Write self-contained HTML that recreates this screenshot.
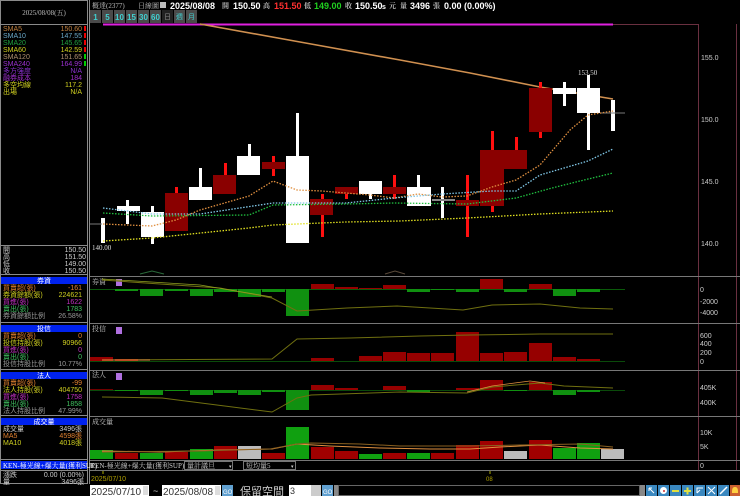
<!DOCTYPE html>
<html><head><meta charset="utf-8"><style>
html,body{margin:0;padding:0;background:#000;width:740px;height:496px;overflow:hidden}
svg{display:block}
text{font-family:"Liberation Sans","Noto Sans CJK TC",sans-serif}
.s{font-family:"Liberation Serif","Noto Serif CJK SC",serif;font-size:7px}
</style></head><body>
<svg width="740" height="496" viewBox="0 0 740 496" xmlns="http://www.w3.org/2000/svg">
<rect width="740" height="496" fill="#000"/>
<!-- left panel frame -->
<g stroke="#8a8a8a" stroke-width="1" fill="none">
<rect x="0.5" y="0.5" width="87" height="483"/>
<line x1="0" y1="24.5" x2="88" y2="24.5"/>
<line x1="0" y1="245.5" x2="88" y2="245.5"/>
<line x1="0" y1="274.5" x2="88" y2="274.5"/>
<line x1="0" y1="322.5" x2="88" y2="322.5"/>
<line x1="0" y1="369.5" x2="88" y2="369.5"/>
<line x1="0" y1="415.5" x2="88" y2="415.5"/>
<line x1="0" y1="459.5" x2="88" y2="459.5"/>
<line x1="0" y1="470.5" x2="88" y2="470.5"/>
<line x1="89.5" y1="0" x2="89.5" y2="484"/>
</g>
<text x="44" y="15" class="s" fill="#bbb" text-anchor="middle">2025/08/08(五)</text>
<g class="s">
<text x="3" y="31" fill="#c08040">SMA5</text><text x="82" y="31" fill="#c08040" text-anchor="end">150.60</text>
<text x="3" y="38" fill="#6aa8c8">SMA10</text><text x="82" y="38" fill="#6aa8c8" text-anchor="end">147.55</text>
<text x="3" y="45" fill="#20a040">SMA20</text><text x="82" y="45" fill="#20a040" text-anchor="end">145.65</text>
<text x="3" y="52" fill="#d0d020">SMA60</text><text x="82" y="52" fill="#d0d020" text-anchor="end">142.59</text>
<text x="3" y="59" fill="#b09070">SMA120</text><text x="82" y="59" fill="#b09070" text-anchor="end">151.65</text>
<text x="3" y="66" fill="#9a30d0">SMA240</text><text x="82" y="66" fill="#9a30d0" text-anchor="end">164.99</text>
<text x="3" y="73" fill="#8a30d0">多方強度</text><text x="82" y="73" fill="#8a30d0" text-anchor="end">N/A</text>
<text x="3" y="80" fill="#a030d0">融券成本</text><text x="82" y="80" fill="#a030d0" text-anchor="end">184</text>
<text x="3" y="87" fill="#d0d020">多空均線</text><text x="82" y="87" fill="#d0d020" text-anchor="end">117.2</text>
<text x="3" y="94" fill="#d0d020">出場</text><text x="82" y="94" fill="#d0d020" text-anchor="end">N/A</text>
</g>
<g fill="#e00"><rect x="84" y="26" width="2" height="5"/><rect x="84" y="33" width="2" height="5"/><rect x="84" y="40" width="2" height="5"/><rect x="84" y="47" width="2" height="5"/></g>
<g fill="#0c0"><rect x="84" y="54" width="2" height="5"/><rect x="84" y="61" width="2" height="5"/></g>
<g class="s" fill="#ccc">
<text x="3" y="252">開</text><text x="86" y="252" text-anchor="end">150.50</text>
<text x="3" y="259">高</text><text x="86" y="259" text-anchor="end">151.50</text>
<text x="3" y="266">低</text><text x="86" y="266" text-anchor="end">149.00</text>
<text x="3" y="273">收</text><text x="86" y="273" text-anchor="end">150.50</text>
</g>
<!-- blue headers -->
<g fill="#0022ee">
<rect x="1" y="277" width="86" height="7"/>
<rect x="1" y="325" width="86" height="7"/>
<rect x="1" y="372" width="86" height="7"/>
<rect x="1" y="418" width="86" height="7"/>
<rect x="1" y="461" width="86" height="8"/>
</g>
<g class="s" fill="#fff" text-anchor="middle">
<text x="44" y="283">券資</text><text x="44" y="331">投信</text><text x="44" y="378">法人</text><text x="44" y="424">成交量</text>
</g>
<text x="3" y="468" class="s" fill="#fff">KEN-極光線+爆大量(獲利SUP)</text>
<g class="s">
<text x="3" y="290" fill="#e08030">買賣超(張)</text><text x="82" y="290" fill="#e08030" text-anchor="end">-161</text>
<text x="3" y="297" fill="#d0d020">券資餘額(張)</text><text x="82" y="297" fill="#d0d020" text-anchor="end">224621</text>
<text x="3" y="304" fill="#c030c0">買進(張)</text><text x="82" y="304" fill="#c030c0" text-anchor="end">1622</text>
<text x="3" y="311" fill="#40c060">賣出(張)</text><text x="82" y="311" fill="#40c060" text-anchor="end">1783</text>
<text x="3" y="318" fill="#999">券資餘額比例</text><text x="82" y="318" fill="#999" text-anchor="end">26.58%</text>
<text x="3" y="338" fill="#e08030">買賣超(張)</text><text x="82" y="338" fill="#e08030" text-anchor="end">0</text>
<text x="3" y="345" fill="#d0d020">投信持股(張)</text><text x="82" y="345" fill="#d0d020" text-anchor="end">90966</text>
<text x="3" y="352" fill="#c030c0">買進(張)</text><text x="82" y="352" fill="#c030c0" text-anchor="end">0</text>
<text x="3" y="359" fill="#40c060">賣出(張)</text><text x="82" y="359" fill="#40c060" text-anchor="end">0</text>
<text x="3" y="366" fill="#999">投信持股比例</text><text x="82" y="366" fill="#999" text-anchor="end">10.77%</text>
<text x="3" y="385" fill="#e08030">買賣超(張)</text><text x="82" y="385" fill="#e08030" text-anchor="end">-99</text>
<text x="3" y="392" fill="#d0d020">法人持股(張)</text><text x="82" y="392" fill="#d0d020" text-anchor="end">404750</text>
<text x="3" y="399" fill="#c030c0">買進(張)</text><text x="82" y="399" fill="#c030c0" text-anchor="end">1758</text>
<text x="3" y="406" fill="#40c060">賣出(張)</text><text x="82" y="406" fill="#40c060" text-anchor="end">1858</text>
<text x="3" y="413" fill="#999">法人持股比例</text><text x="82" y="413" fill="#999" text-anchor="end">47.99%</text>
<text x="3" y="431" fill="#ccc">成交量</text><text x="82" y="431" fill="#ccc" text-anchor="end">3496張</text>
<text x="3" y="438" fill="#e08030">MA5</text><text x="82" y="438" fill="#e08030" text-anchor="end">4598張</text>
<text x="3" y="445" fill="#d0d020">MA10</text><text x="82" y="445" fill="#d0d020" text-anchor="end">4018張</text>
<text x="3" y="477" fill="#ccc">漲跌</text><text x="84" y="477" fill="#ccc" text-anchor="end">0.00 (0.00%)</text>
<text x="3" y="484" fill="#ccc">量</text><text x="84" y="484" fill="#ccc" text-anchor="end">3496張</text>
</g>

<!-- top info bar -->
<text x="92" y="8" class="s" fill="#bbb">概達(2377)</text>
<text x="138" y="8" class="s" fill="#bbb">日線圖</text>
<rect x="160" y="2" width="6" height="6" fill="#bbb"/>
<g font-weight="bold" font-size="9">
<text x="170" y="9" fill="#fff">2025/08/08</text>
<text x="222" y="8" class="s" fill="#bbb">開</text><text x="233" y="9" fill="#fff">150.50</text>
<text x="263" y="8" class="s" fill="#bbb">高</text><text x="274" y="9" fill="#ff3030">151.50</text>
<text x="304" y="8" class="s" fill="#bbb">低</text><text x="314" y="9" fill="#20d020">149.00</text>
<text x="345" y="8" class="s" fill="#bbb">收</text><text x="355" y="9" fill="#fff">150.50</text>
<text x="382" y="9" fill="#fff" font-size="7">s</text><text x="389" y="8" class="s" fill="#bbb">元</text>
<text x="400" y="8" class="s" fill="#bbb">量</text><text x="410" y="9" fill="#fff">3496</text>
<text x="433" y="8" class="s" fill="#bbb">張</text>
<text x="444" y="9" fill="#fff">0.00 (0.00%)</text>
</g>
<!-- period buttons -->
<g fill="#4a4a4a">
<rect x="90" y="10" width="11" height="13"/><rect x="102" y="10" width="11" height="13"/><rect x="114" y="10" width="11" height="13"/><rect x="126" y="10" width="11" height="13"/><rect x="138" y="10" width="11" height="13"/><rect x="150" y="10" width="11" height="13"/><rect x="174" y="10" width="11" height="13"/><rect x="186" y="10" width="11" height="13"/>
</g>
<rect x="162" y="10" width="11" height="13" fill="#222"/>
<g font-size="8" font-weight="bold" fill="#40d0d0" text-anchor="middle">
<text x="95.5" y="20">1</text><text x="107.5" y="20">5</text><text x="119.5" y="20">10</text><text x="131.5" y="20">15</text><text x="143.5" y="20">30</text><text x="155.5" y="20">60</text>
</g>
<g class="s" fill="#40d0d0" text-anchor="middle"><text x="167.5" y="19" fill="#888">日</text><text x="179.5" y="19">週</text><text x="191.5" y="19">月</text></g>

<!-- chart frame -->
<g stroke="#6a3040" fill="none">
<line x1="613" y1="24.5" x2="698" y2="24.5"/>
<line x1="698.5" y1="24" x2="698.5" y2="470"/>
<line x1="736.5" y1="24" x2="736.5" y2="470"/>
</g>
<line x1="103" y1="24.5" x2="613" y2="24.5" stroke="#e020e0" stroke-width="2"/>
<g stroke="#777" stroke-width="1">
<line x1="90" y1="276.5" x2="740" y2="276.5"/>
<line x1="90" y1="323.5" x2="740" y2="323.5"/>
<line x1="90" y1="370.5" x2="740" y2="370.5"/>
<line x1="90" y1="416.5" x2="740" y2="416.5"/>
<line x1="90" y1="460.5" x2="740" y2="460.5"/>
<line x1="90" y1="470.5" x2="740" y2="470.5"/>
</g>
<!-- price axis -->
<g class="s" fill="#ccc">
<text x="701" y="60">155.0</text><text x="701" y="122">150.0</text><text x="701" y="184">145.0</text><text x="701" y="246">140.0</text>
</g>
<!-- MA240 solid tan -->
<polyline points="200,24 300,42 400,60 470,73 540,87 613,99" fill="none" stroke="#d09050" stroke-width="1.6"/>
<!-- candles -->
<g fill="#ff1010">
<rect x="175" y="187" width="3" height="7"/><rect x="224" y="163" width="3" height="12"/><rect x="272" y="156" width="3" height="20"/><rect x="321" y="194" width="3" height="43"/><rect x="345" y="194" width="3" height="5"/><rect x="393" y="175" width="3" height="24"/><rect x="466" y="175" width="3" height="62"/><rect x="491" y="131" width="3" height="81"/><rect x="515" y="137" width="3" height="13"/><rect x="539" y="82" width="3" height="56"/>
</g>
<g fill="#8a0000">
<rect x="165" y="193" width="23" height="38"/><rect x="213" y="175" width="23" height="19"/><rect x="262" y="162" width="23" height="7"/><rect x="310" y="199" width="23" height="16"/><rect x="335" y="187" width="23" height="7"/><rect x="383" y="187" width="23" height="7"/><rect x="456" y="200" width="23" height="6"/><rect x="480" y="150" width="24" height="56"/><rect x="504" y="150" width="23" height="19"/><rect x="529" y="88" width="23" height="44"/>
</g>
<g fill="#fff">
<rect x="101" y="218" width="4" height="25"/>
<rect x="126" y="200" width="3" height="24"/><rect x="117" y="206" width="23" height="5"/>
<rect x="151" y="206" width="3" height="38"/><rect x="141" y="212" width="23" height="25"/>
<rect x="199" y="168" width="3" height="19"/><rect x="189" y="187" width="23" height="13"/>
<rect x="248" y="144" width="3" height="12"/><rect x="237" y="156" width="23" height="19"/>
<rect x="296" y="113" width="3" height="43"/><rect x="286" y="156" width="23" height="87"/>
<rect x="369" y="194" width="3" height="5"/><rect x="359" y="181" width="23" height="13"/>
<rect x="417" y="175" width="3" height="12"/><rect x="407" y="187" width="24" height="19"/>
<rect x="441" y="187" width="3" height="31"/>
<rect x="563" y="82" width="3" height="24"/><rect x="553" y="88" width="23" height="6"/>
<rect x="587" y="75" width="3" height="75"/><rect x="577" y="88" width="23" height="25"/>
<rect x="611" y="100" width="4" height="31"/>
</g>
<rect x="432" y="199" width="23" height="2" fill="#888"/>
<line x1="600" y1="113" x2="625" y2="113" stroke="#777"/>
<line x1="90" y1="224" x2="102" y2="224" stroke="#777"/>
<text x="578" y="75" class="s" fill="#ddd">153.50</text>
<text x="92" y="250" class="s" fill="#ddd">140.00</text>
<!-- dotted MAs -->
<g fill="none" stroke-width="1.3" stroke-dasharray="1.5 1.5">
<polyline stroke="#e09040" points="103,224 152,226 176,220 200,210 249,196 273,181 297,190 322,191 346,193 370,195 394,198 418,194 442,197 467,196 492,187 516,180 540,165 552,151 570,130 588,115 613,111"/>
<polyline stroke="#80c8e8" points="103,208 152,214 200,214 273,203 297,203 346,203 394,198 442,194 492,191 516,191 540,175 564,168 588,161 613,149"/>
<polyline stroke="#20c040" points="103,213 152,216 249,215 273,205 346,204 394,203 467,204 516,198 552,188 580,181 613,173"/>
<polyline stroke="#e0e020" points="103,241 152,238 249,228 273,225 346,222 400,221 467,218 540,214 613,211"/>
</g>
<polyline points="140,274 152,271 164,274" fill="none" stroke="#2a6a3a"/>
<polyline points="385,274 395,271 405,274" fill="none" stroke="#5a4a3a"/>

<!-- 券資 panel -->
<text x="92" y="284" class="s" fill="#ccc">券資</text>
<rect x="116" y="279" width="6" height="7" fill="#b070e0"/>
<line x1="90" y1="289.5" x2="625" y2="289.5" stroke="#0a5a0a"/>
<g fill="#109010">
<rect x="115" y="289" width="23" height="2"/><rect x="140" y="289" width="23" height="7"/><rect x="165" y="289" width="23" height="2"/><rect x="190" y="289" width="23" height="7"/><rect x="214" y="289" width="23" height="3"/><rect x="238" y="289" width="23" height="8"/><rect x="262" y="289" width="23" height="3"/><rect x="286" y="289" width="23" height="27"/><rect x="407" y="289" width="23" height="3"/><rect x="431" y="289" width="23" height="1"/><rect x="456" y="289" width="23" height="3"/><rect x="504" y="289" width="23" height="3"/><rect x="553" y="289" width="23" height="7"/><rect x="577" y="289" width="23" height="3"/>
</g>
<g fill="#960000">
<rect x="311" y="284" width="23" height="5"/><rect x="335" y="287" width="23" height="2"/><rect x="359" y="288" width="23" height="1"/><rect x="383" y="285" width="23" height="4"/><rect x="480" y="279" width="23" height="10"/><rect x="529" y="284" width="23" height="5"/>
</g>
<polyline points="102,280 160,284 220,288 272,298 297,311 347,308 397,306 463,310 492,305 540,304 580,308 613,309" fill="none" stroke="#707010"/>
<polyline points="102,279 200,285 272,297" fill="none" stroke="#90a020" stroke-width="0.8"/>
<g class="s" fill="#ccc"><text x="700" y="292">0</text><text x="700" y="304">-2000</text><text x="700" y="315">-4000</text></g>

<!-- 投信 panel -->
<text x="92" y="331" class="s" fill="#ccc">投信</text>
<rect x="116" y="327" width="6" height="7" fill="#b070e0"/>
<line x1="90" y1="361.5" x2="625" y2="361.5" stroke="#0a4a0a"/>
<g fill="#960000">
<rect x="90" y="357" width="23" height="4"/><rect x="115" y="359" width="23" height="2"/><rect x="311" y="358" width="23" height="3"/><rect x="359" y="356" width="23" height="5"/><rect x="383" y="352" width="23" height="9"/><rect x="407" y="353" width="23" height="8"/><rect x="431" y="353" width="23" height="8"/><rect x="456" y="332" width="23" height="29"/><rect x="480" y="353" width="23" height="8"/><rect x="504" y="352" width="23" height="9"/><rect x="529" y="343" width="23" height="18"/><rect x="553" y="357" width="23" height="4"/><rect x="577" y="359" width="23" height="2"/>
</g>
<polyline points="102,360 272,359 297,339 350,338 420,336 470,335 540,334 613,334" fill="none" stroke="#707010"/>
<line x1="102" y1="360" x2="150" y2="360" stroke="#e09040"/>
<g class="s" fill="#ccc"><text x="700" y="338">600</text><text x="700" y="346">400</text><text x="700" y="355">200</text><text x="700" y="364">0</text></g>

<!-- 法人 panel -->
<text x="92" y="377" class="s" fill="#ccc">法人</text>
<rect x="116" y="373" width="6" height="7" fill="#b070e0"/>
<line x1="90" y1="390.5" x2="625" y2="390.5" stroke="#0a4a0a"/>
<line x1="90" y1="389.5" x2="113" y2="389.5" stroke="#700000"/>
<g fill="#109010">
<rect x="115" y="390" width="23" height="1"/><rect x="140" y="390" width="23" height="5"/><rect x="165" y="390" width="23" height="1"/><rect x="190" y="390" width="23" height="5"/><rect x="214" y="390" width="23" height="3"/><rect x="238" y="390" width="23" height="5"/><rect x="262" y="390" width="23" height="2"/><rect x="286" y="390" width="23" height="20"/><rect x="407" y="390" width="23" height="2"/><rect x="504" y="390" width="23" height="1"/><rect x="553" y="390" width="23" height="5"/><rect x="577" y="390" width="23" height="2"/>
</g>
<g fill="#960000">
<rect x="311" y="385" width="23" height="5"/><rect x="335" y="388" width="23" height="2"/><rect x="383" y="386" width="23" height="4"/><rect x="456" y="388" width="23" height="2"/><rect x="480" y="380" width="23" height="10"/><rect x="529" y="382" width="23" height="8"/>
</g>
<polyline points="102,397 162,398 272,412 297,398 311,395 400,392 467,393 492,387 540,383 564,386 613,388" fill="none" stroke="#707010"/>
<polyline points="467,392 492,386 530,381 545,383" fill="none" stroke="#e09040" stroke-width="0.8"/>
<g class="s" fill="#ccc"><text x="700" y="390">405K</text><text x="700" y="405">400K</text></g>

<!-- 成交量 panel -->
<text x="92" y="424" class="s" fill="#ccc">成交量</text>
<g>
<rect x="90" y="450" width="23" height="9" fill="#10a010"/>
<rect x="115" y="453" width="23" height="6" fill="#a00000"/>
<rect x="140" y="453" width="23" height="6" fill="#10a010"/>
<rect x="165" y="452" width="23" height="7" fill="#a00000"/>
<rect x="190" y="449" width="23" height="10" fill="#10a010"/>
<rect x="214" y="446" width="23" height="13" fill="#a00000"/>
<rect x="238" y="446" width="23" height="13" fill="#bbb"/>
<rect x="262" y="453" width="23" height="6" fill="#a00000"/>
<rect x="286" y="427" width="23" height="32" fill="#10a010"/>
<rect x="311" y="447" width="23" height="12" fill="#a00000"/>
<rect x="335" y="451" width="23" height="8" fill="#a00000"/>
<rect x="359" y="454" width="23" height="5" fill="#10a010"/>
<rect x="383" y="453" width="23" height="6" fill="#a00000"/>
<rect x="407" y="453" width="23" height="6" fill="#10a010"/>
<rect x="431" y="453" width="23" height="6" fill="#a00000"/>
<rect x="456" y="445" width="23" height="14" fill="#a00000"/>
<rect x="480" y="441" width="23" height="18" fill="#a00000"/>
<rect x="504" y="451" width="23" height="8" fill="#bbb"/>
<rect x="529" y="440" width="23" height="19" fill="#a00000"/>
<rect x="553" y="448" width="23" height="11" fill="#10a010"/>
<rect x="577" y="443" width="23" height="16" fill="#10a010"/>
<rect x="601" y="449" width="23" height="10" fill="#bbb"/>
</g>
<polyline points="102,451 160,452 220,450 272,449 297,444 330,446 380,448 430,449 470,449 500,447 540,445 580,448 613,449" fill="none" stroke="#e09040"/>
<polyline points="102,452 200,451 270,449 297,444 311,443 360,444 400,446 470,446 520,445 580,444 613,447" fill="none" stroke="#8a6020"/>
<g class="s" fill="#ccc"><text x="700" y="435">10K</text><text x="700" y="449">5K</text><text x="700" y="468">0</text></g>

<!-- indicator selector row -->
<text x="90" y="468" class="s" fill="#ccc" font-size="6">KEN-極光線+爆大量(獲利SUP)</text>
<rect x="184.5" y="461.5" width="48" height="8" fill="#000" stroke="#777"/>
<text x="187" y="468" class="s" fill="#ccc">量計議旦</text><text x="229" y="468" font-size="5" fill="#ccc">▾</text>
<rect x="243.5" y="461.5" width="52" height="8" fill="#000" stroke="#777"/>
<text x="246" y="468" class="s" fill="#ccc">短均量5</text><text x="291" y="468" font-size="5" fill="#ccc">▾</text>
<!-- date row -->
<line x1="103" y1="471" x2="103" y2="474" stroke="#aa0"/>
<text x="91" y="481" font-size="7" fill="#b0a000">2025/07/10</text>
<line x1="490" y1="471" x2="490" y2="474" stroke="#aa0"/>
<text x="486" y="481" font-size="6" fill="#b0a000">08</text>

<!-- bottom controls -->
<rect x="90" y="485" width="59" height="11" fill="#fff"/>
<text x="91" y="495" font-size="10" fill="#333">2025/07/10</text>
<rect x="143" y="486" width="5" height="9" fill="#ddd"/>
<text x="153" y="494" font-size="9" fill="#ccc">~</text>
<rect x="162" y="485" width="59" height="11" fill="#fff"/>
<text x="163" y="495" font-size="10" fill="#333">2025/08/08</text>
<rect x="215" y="486" width="5" height="9" fill="#ddd"/>
<rect x="222" y="485" width="11" height="11" fill="#60a0d0"/>
<text x="223" y="494" font-size="6" fill="#fff">GO</text>
<text x="240" y="495" font-size="11" fill="#ccc" font-family="Liberation Sans,Noto Sans CJK TC,sans-serif">保留空間</text>
<rect x="289" y="485" width="22" height="11" fill="#fff"/>
<text x="290" y="494" font-size="9" fill="#333">3</text>
<rect x="311" y="485" width="10" height="11" fill="#ccc"/>
<rect x="322" y="485" width="11" height="11" fill="#60a0d0"/>
<text x="323" y="494" font-size="6" fill="#fff">GO</text>
<rect x="334" y="485" width="4" height="11" fill="#888"/>
<rect x="338.5" y="485.5" width="301" height="10" fill="#000" stroke="#666"/>
<rect x="640" y="485" width="5" height="11" fill="#888"/>
<g fill="#3a88c0">
<rect x="646" y="485" width="11" height="11"/><rect x="658" y="485" width="11" height="11"/><rect x="670" y="485" width="11" height="11"/><rect x="682" y="485" width="11" height="11"/><rect x="694" y="485" width="11" height="11"/><rect x="706" y="485" width="11" height="11"/><rect x="718" y="485" width="11" height="11"/>
</g>
<rect x="730" y="485" width="10" height="11" fill="#cc6030"/>
<path d="M649 488 L654 493 M649 488 L652 488 M649 488 L649 491" stroke="#fff" fill="none"/>
<circle cx="663.5" cy="490.5" r="3.5" fill="#fff"/><circle cx="664" cy="491" r="1" fill="#d03030"/>
<rect x="672" y="490" width="7" height="2" fill="#e0e040"/>
<path d="M684 491 h7 M687.5 487.5 v7" stroke="#e0e040" stroke-width="2"/>
<path d="M697 493 V488 H703 M700 490 L697 493" stroke="#fff" fill="none"/>
<path d="M708 487 L715 494 M715 487 L708 494" stroke="#fff" fill="none"/>
<path d="M720 494 L727 487" stroke="#fff" stroke-width="1.5"/>
<path d="M735 487 C732 487 732 490 732 493 H738 C738 490 738 487 735 487 Z" fill="#ffd040"/>
</svg>
</body></html>
